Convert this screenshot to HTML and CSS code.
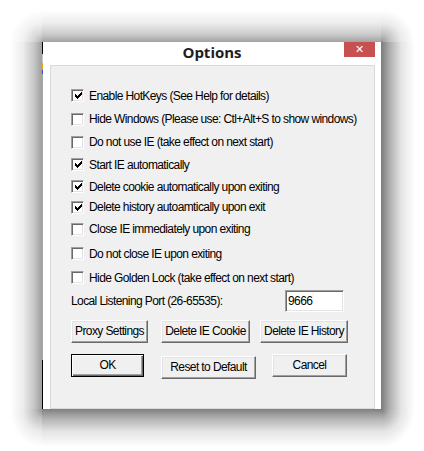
FILE: index.html
```html
<!DOCTYPE html>
<html>
<head>
<meta charset="utf-8">
<link rel="stylesheet" href="styles.css">
</head>
<body>
<div class="stage">
 <div class="shade">
  <div class="dialog">
    <div class="titlebar">
      <span class="title">Options</span>
      <span class="close">&#x2715;</span>
    </div>
    <div class="panel">
      <div class="row"><span class="box checked"><svg viewBox="0 0 7 7" width="7" height="7"><path d="M0 2h1v1h1v1h1v-1h1v-1h1v-1h1v-1h1v3h-1v1h-1v1h-1v1h-1v1h-1v-1h-1v-1h-1z" fill="#000"/></svg></span><span class="label">Enable HotKeys (See Help for details)</span></div>
      <div class="row"><span class="box"></span><span class="label">Hide Windows (Please use: Ctl+Alt+S to show windows)</span></div>
      <div class="row"><span class="box"></span><span class="label">Do not use IE (take effect on next start)</span></div>
      <div class="row"><span class="box checked"><svg viewBox="0 0 7 7" width="7" height="7"><path d="M0 2h1v1h1v1h1v-1h1v-1h1v-1h1v-1h1v3h-1v1h-1v1h-1v1h-1v1h-1v-1h-1v-1h-1z" fill="#000"/></svg></span><span class="label">Start IE automatically</span></div>
      <div class="row"><span class="box checked"><svg viewBox="0 0 7 7" width="7" height="7"><path d="M0 2h1v1h1v1h1v-1h1v-1h1v-1h1v-1h1v3h-1v1h-1v1h-1v1h-1v1h-1v-1h-1v-1h-1z" fill="#000"/></svg></span><span class="label">Delete cookie automatically upon exiting</span></div>
      <div class="row"><span class="box checked"><svg viewBox="0 0 7 7" width="7" height="7"><path d="M0 2h1v1h1v1h1v-1h1v-1h1v-1h1v-1h1v3h-1v1h-1v1h-1v1h-1v1h-1v-1h-1v-1h-1z" fill="#000"/></svg></span><span class="label">Delete history autoamtically upon exit</span></div>
      <div class="row"><span class="box"></span><span class="label">Close IE immediately upon exiting</span></div>
      <div class="row"><span class="box"></span><span class="label">Do not close IE upon exiting</span></div>
      <div class="row"><span class="box"></span><span class="label">Hide Golden Lock (take effect on next start)</span></div>
      <div class="portrow"><span class="portlabel">Local Listening Port (26-65535):</span><span class="input">9666</span></div>
      <div class="btnrow one">
        <span class="btn b-proxy">Proxy Settings</span>
        <span class="btn b-cookie">Delete IE Cookie</span>
        <span class="btn b-history">Delete IE History</span>
      </div>
      <div class="btnrow two">
        <span class="btn default b-ok">OK</span>
        <span class="btn b-reset">Reset to Default</span>
        <span class="btn b-cancel">Cancel</span>
      </div>
    </div>
  </div>
 </div>
</div>
</body>
</html>
```
FILE: styles.css
```css
html, body {
  margin: 0;
  padding: 0;
  background: #ffffff;
}
.stage {
  padding: 10px 0 0 10px;
}
.shade {
  width: 339px;
  padding: 32px 34px 38px 32px;
  background:
    linear-gradient(to top, rgba(0,0,0,0.36) 0, rgba(0,0,0,0.2) 25%, rgba(0,0,0,0.07) 60%, rgba(0,0,0,0) 100%) 32px 0 / 339px 32px no-repeat,
    linear-gradient(to bottom, rgba(0,0,0,0.5) 0, rgba(0,0,0,0.3) 25%, rgba(0,0,0,0.1) 60%, rgba(0,0,0,0) 100%) 32px 399px / 339px 38px no-repeat,
    linear-gradient(to left, rgba(0,0,0,0.38) 0, rgba(0,0,0,0.22) 25%, rgba(0,0,0,0.07) 60%, rgba(0,0,0,0) 100%) 0 32px / 32px 367px no-repeat,
    linear-gradient(to right, rgba(0,0,0,0.52) 0, rgba(0,0,0,0.32) 25%, rgba(0,0,0,0.1) 60%, rgba(0,0,0,0) 100%) 371px 32px / 34px 367px no-repeat,
    radial-gradient(farthest-side at 100% 100%, rgba(0,0,0,0.3) 0, rgba(0,0,0,0.16) 25%, rgba(0,0,0,0.05) 60%, rgba(0,0,0,0) 100%) 0 0 / 32px 32px no-repeat,
    radial-gradient(farthest-side at 0 100%, rgba(0,0,0,0.42) 0, rgba(0,0,0,0.24) 25%, rgba(0,0,0,0.08) 60%, rgba(0,0,0,0) 100%) 371px 0 / 34px 32px no-repeat,
    radial-gradient(farthest-side at 100% 0, rgba(0,0,0,0.42) 0, rgba(0,0,0,0.24) 25%, rgba(0,0,0,0.08) 60%, rgba(0,0,0,0) 100%) 0 399px / 32px 38px no-repeat,
    radial-gradient(farthest-side at 0 0, rgba(0,0,0,0.52) 0, rgba(0,0,0,0.3) 25%, rgba(0,0,0,0.1) 60%, rgba(0,0,0,0) 100%) 371px 399px / 34px 38px no-repeat;
}
.dialog {
  position: relative;
  width: 339px;
  height: 367px;
  box-sizing: border-box;
  padding-left: 1px;
  background: #ffffff;
  display: flex;
  flex-direction: column;
  font-family: "Liberation Sans", Arial, sans-serif;
  font-size: 12px;
  letter-spacing: -0.6px;
  color: #000;
}
.dialog::before {
  content: "";
  position: absolute;
  left: 0;
  top: 0;
  bottom: 0;
  width: 1px;
  background: linear-gradient(to bottom, #000 0, #000 12px, #c8c8c8 12px, #c8c8c8 21px, #f0a020 21px, #f0a020 28px, #2a50c0 28px, #2a50c0 32px, #a8a8a8 32px, #a8a8a8 318px, #000 318px, #000 100%);
}
.titlebar {
  height: 24px;
  display: flex;
  align-items: flex-start;
  justify-content: center;
  position: relative;
}
.title {
  font-family: "Open Sans", "Noto Sans", sans-serif;
  font-weight: 700;
  font-size: 15px;
  letter-spacing: 0;
  line-height: 20px;
  margin-top: 0;
  color: #1e1e1e;
}
.close {
  position: absolute;
  right: 6px;
  top: 0;
  width: 31px;
  height: 15px;
  background: #c75050;
  color: #fff;
  font-size: 11px;
  font-weight: 700;
  letter-spacing: 0;
  line-height: 15px;
  text-align: center;
  font-family: "DejaVu Sans", sans-serif;
}
.panel {
  margin: 0 6px 0 7px;
  height: 335px;
  border: 1px solid #dadada;
  background: #f0f0f0;
  padding: 18px 0 0 20px;
}
.row {
  display: flex;
  align-items: center;
  height: 23px;
}
.row:nth-child(2) { height: 24px; }
.row:nth-child(3) { height: 22px; }
.row:nth-child(5) { height: 21px; }
.row:nth-child(6) { height: 20px; }
.row:nth-child(7) { height: 24px; }
.row:nth-child(8) { height: 25px; }
.box {
  width: 13px;
  height: 13px;
  box-sizing: border-box;
  background: #fff;
  border-top: 1px solid #a0a0a0;
  border-left: 1px solid #a0a0a0;
  border-right: 1px solid #fff;
  border-bottom: 1px solid #fff;
  box-shadow: inset 1px 1px 0 #696969, inset -1px -1px 0 #e3e3e3;
  display: flex;
  align-items: center;
  justify-content: center;
  flex: none;
}
.box svg {
  display: block;
  margin: 0 0 0 1px;
}
.label {
  margin-left: 5px;
  white-space: nowrap;
}
.portrow {
  display: flex;
  align-items: center;
  height: 22px;
  margin-top: 1px;
}
.portlabel {
  width: 214px;
}
.input {
  width: 59px;
  height: 22px;
  box-sizing: border-box;
  background: #fff;
  border-top: 1px solid #a0a0a0;
  border-left: 1px solid #a0a0a0;
  border-right: 1px solid #fff;
  border-bottom: 1px solid #fff;
  box-shadow: inset 1px 1px 0 #696969, inset -1px -1px 0 #e3e3e3;
  padding: 3px 0 0 2px;
  line-height: 15px;
}
.btnrow {
  display: flex;
  height: 23px;
}
.btnrow.one { margin-top: 8px; }
.btnrow.two { margin-top: 11px; }
.btn {
  height: 23px;
  box-sizing: border-box;
  background: #f0f0f0;
  border-top: 1px solid #fff;
  border-left: 1px solid #fff;
  border-right: 1px solid #696969;
  border-bottom: 1px solid #696969;
  box-shadow: inset -1px -1px 0 #a0a0a0, inset 1px 1px 0 #e3e3e3;
  display: flex;
  align-items: center;
  justify-content: center;
  white-space: nowrap;
  padding-bottom: 1px;
}
.btn.default {
  border: 1px solid #000;
  box-shadow: inset 1px 1px 0 #fff, inset -1px -1px 0 #696969, inset -2px -2px 0 #a0a0a0;
}
.b-proxy { width: 77px; }
.b-cookie { width: 89px; margin-left: 13px; }
.b-history { width: 88px; margin-left: 10px; }
.b-ok { width: 73px; }
.b-reset { width: 95px; margin-left: 17px; margin-top: 2px; }
.b-cancel { width: 75px; margin-left: 16px; }
```
